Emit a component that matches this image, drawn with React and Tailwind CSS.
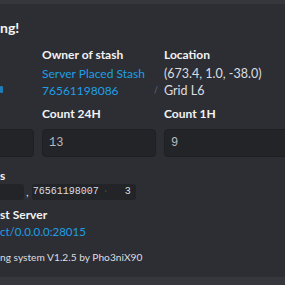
const Label = ({ children, className = "" }) => (
  <div className={`text-[12px] font-bold leading-[17px] text-[#f2f3f5] ${className}`}>{children}</div>
);

const CodeBox = ({ children, className = "" }) => (
  <div className={`mt-[7px] h-[28px] rounded-[4px] border border-[#1e1f22] bg-[#232428] px-[6px] pt-[5px] font-['Liberation_Mono',monospace] text-[12px] leading-[16px] text-[#b5bac1] ${className}`}>
    {children}
  </div>
);

const App = () => {
  return (
    <div className="h-[285px] w-[285px] overflow-hidden bg-[#36373d] font-['Lato',sans-serif]">
      <div className="mt-[4px] h-[273px] bg-[#2d2e33] pt-[15px]">
        <div className="text-[14px] font-bold leading-[18px] text-[#f2f3f5]">ng!</div>

        <div className="mt-[9px] grid grid-cols-[34px_114px_1fr] gap-x-[8px]">
          <div>
            <div className="mt-[40px] h-[7px] w-[3px] rounded-[1px] bg-[#1e7fb8]" />
          </div>
          <div className="relative">
            <Label>Owner of stash</Label>
            <div className="mt-[2px] text-[12px] leading-[17px] text-[#1e9fe6]">
              <div>Server Placed Stash</div>
              <div>76561198086</div>
            </div>
            <span className="absolute right-[-2px] top-[37px] text-[9px] text-[#5d6b80]">/</span>
          </div>
          <div>
            <Label>Location</Label>
            <div className="mt-[2px] text-[12.5px] leading-[17px] text-[#dbdee1]">
              <div>(673.4, 1.0, -38.0)</div>
              <div>Grid L6</div>
            </div>
          </div>

          <div className="mt-[6px] ml-[-20px]">
            <Label className="invisible">Count</Label>
            <CodeBox />
          </div>
          <div className="mt-[6px]">
            <Label>Count 24H</Label>
            <CodeBox>13</CodeBox>
          </div>
          <div className="mt-[6px] mr-[-20px]">
            <Label>Count 1H</Label>
            <CodeBox>9</CodeBox>
          </div>
        </div>

        <div className="mt-[10px]">
          <Label>s</Label>
          <div className="flex items-center font-['Liberation_Mono',monospace] text-[10px] leading-[16px] text-[#dbdee1]">
            <span className="h-[16px] w-[24px] rounded-r-[3px] bg-[#232428]" />
            <span className="ml-[2px] mr-[3px] font-['Lato',sans-serif] text-[12px]">,</span>
            <span className="flex h-[16px] w-[104px] items-center rounded-[3px] bg-[#232428] pl-[1px] pr-[2px]">
              <span>76561198007</span>
              <span className="ml-[4px] text-[#4a4c52]">·</span>
              <span className="ml-auto mr-[3px]">3</span>
            </span>
          </div>
        </div>

        <div className="mt-[6px]">
          <Label>st Server</Label>
          <div className="text-[11.5px] leading-[17px] text-[#1e9fe6]">ct/0.0.0.0:28015</div>
        </div>

        <div className="mt-[9px] text-[10.2px] leading-[16px] text-[#dbdee1]">ng system V1.2.5 by Pho3niX90</div>
      </div>
    </div>
  );
};

export default App;
